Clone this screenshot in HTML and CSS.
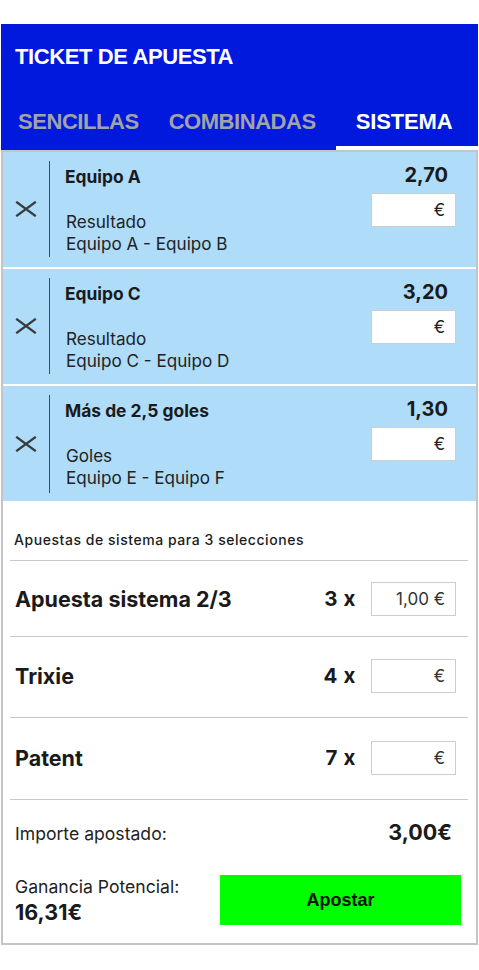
FILE: index.html
```html
<!DOCTYPE html>
<html lang="es">
<head>
<meta charset="utf-8">
<title>Ticket de apuesta</title>
<link rel="stylesheet" href="styles.css">
</head>
<body>
<div class="ticket">
  <header class="ticket-head">
    <h1 class="ticket-title">TICKET DE APUESTA</h1>
    <nav class="tabs">
      <span class="tab tab-first">SENCILLAS</span>
      <span class="tab">COMBINADAS</span>
      <span class="tab tab-active">SISTEMA</span>
    </nav>
  </header>

  <section class="panel">
    <div class="selections">
      <div class="sel">
        <div class="sel-remove">
          <svg class="x-icon" viewBox="0 0 22 16" width="22" height="16"><path d="M1.2 0.8 L20.8 15.2 M20.8 0.8 L1.2 15.2"/></svg>
        </div>
        <div class="sel-body">
          <div class="sel-name">Equipo A</div>
          <div class="sel-market">Resultado</div>
          <div class="sel-event">Equipo A - Equipo B</div>
        </div>
        <div class="sel-side">
          <div class="sel-odds">2,70</div>
          <div class="stake">€</div>
        </div>
      </div>
      <div class="sel">
        <div class="sel-remove">
          <svg class="x-icon" viewBox="0 0 22 16" width="22" height="16"><path d="M1.2 0.8 L20.8 15.2 M20.8 0.8 L1.2 15.2"/></svg>
        </div>
        <div class="sel-body">
          <div class="sel-name">Equipo C</div>
          <div class="sel-market">Resultado</div>
          <div class="sel-event">Equipo C - Equipo D</div>
        </div>
        <div class="sel-side">
          <div class="sel-odds">3,20</div>
          <div class="stake">€</div>
        </div>
      </div>
      <div class="sel">
        <div class="sel-remove">
          <svg class="x-icon" viewBox="0 0 22 16" width="22" height="16"><path d="M1.2 0.8 L20.8 15.2 M20.8 0.8 L1.2 15.2"/></svg>
        </div>
        <div class="sel-body">
          <div class="sel-name">Más de 2,5 goles</div>
          <div class="sel-market">Goles</div>
          <div class="sel-event">Equipo E - Equipo F</div>
        </div>
        <div class="sel-side">
          <div class="sel-odds">1,30</div>
          <div class="stake">€</div>
        </div>
      </div>
    </div>

    <div class="system">
      <div class="system-caption">Apuestas de sistema para 3 selecciones</div>
      <div class="sys-row">
        <span class="sys-name">Apuesta sistema 2/3</span>
        <span class="sys-count">3 x</span>
        <span class="stake stake-sys">1,00 €</span>
      </div>
      <div class="sys-row sys-row-tall">
        <span class="sys-name">Trixie</span>
        <span class="sys-count">4 x</span>
        <span class="stake stake-sys">€</span>
      </div>
      <div class="sys-row sys-row-last">
        <span class="sys-name">Patent</span>
        <span class="sys-count">7 x</span>
        <span class="stake stake-sys">€</span>
      </div>
    </div>

    <div class="summary">
      <div class="sum-row">
        <span class="sum-label">Importe apostado:</span>
        <span class="sum-total">3,00€</span>
      </div>
      <div class="sum-row sum-row-bet">
        <div class="gain">
          <div class="sum-label">Ganancia Potencial:</div>
          <div class="gain-value">16,31€</div>
        </div>
        <button class="bet-btn" type="button">Apostar</button>
      </div>
    </div>
  </section>
</div>
</body>
</html>
```

FILE: styles.css
```css
* { box-sizing: border-box; }

body {
  margin: 0;
  background: #ffffff;
  font-family: Inter, "Noto Sans", sans-serif;
  color: #1c1c1c;
}

.ticket {
  width: 477px;
  margin: 24px 1px 0;
}

/* Header */
.ticket-head {
  background: #0019dc;
  height: 126px;
  padding-top: 20px;
  font-family: "Liberation Sans", Arial, sans-serif;
}

.ticket-title {
  margin: 0;
  padding-left: 14px;
  font-size: 22px;
  line-height: 26px;
  font-weight: 700;
  letter-spacing: -0.4px;
  color: #ffffff;
}

.tabs {
  display: flex;
  margin-top: 39px;
}

.tab {
  padding: 0 15px 11px;
  font-size: 22px;
  line-height: 26px;
  font-weight: 700;
  letter-spacing: -0.45px;
  color: #a2a2aa;
  border-bottom: 4px solid transparent;
  white-space: nowrap;
}

.tab-first { padding-left: 17px; }

.tab-active {
  flex: 1;
  margin-left: 5px;
  padding-left: 20px;
  letter-spacing: -0.15px;
  color: #ffffff;
  border-bottom-color: #ffffff;
}

/* Panel */
.panel {
  border: 2px solid #c4c4c4;
  height: 795px;
  display: flex;
  flex-direction: column;
}

.sel {
  display: flex;
  height: 117px;
  padding: 9px 20px 10px 0;
  background: #aedcf9;
  border-bottom: 2px solid #ffffff;
}

.sel:last-child {
  height: 115px;
  padding-bottom: 8px;
  border-bottom: 0;
}

.sel-remove {
  width: 46px;
  display: flex;
  align-items: center;
  justify-content: center;
}

.x-icon path {
  stroke: #3c3c3c;
  stroke-width: 2.3;
  fill: none;
}

.sel-body {
  flex: 1;
  border-left: 1px solid #4a4a4a;
  padding-left: 15px;
}

.sel-name {
  margin-top: 5px;
  font-size: 17.4px;
  line-height: 22px;
  font-weight: 700;
  color: #1a1a1a;
}

.sel-market {
  margin-top: 23px;
  padding-left: 1px;
}

.sel-event { padding-left: 1px; }

.sel-market,
.sel-event {
  font-size: 17.1px;
  line-height: 22px;
  color: #222222;
}

.sel-side {
  width: 85px;
  padding-top: 2px;
}

.sel-odds {
  text-align: right;
  padding-right: 8px;
  font-size: 20px;
  line-height: 24px;
  font-weight: 700;
  color: #1a1a1a;
}

.stake {
  display: block;
  margin-top: 6px;
  height: 34px;
  background: #ffffff;
  border: 1px solid #cdcdcd;
  text-align: right;
  padding-right: 10px;
  font-size: 17px;
  line-height: 32px;
  color: #222222;
}

/* System bets */
.system {
  padding: 0 8px 0 7px;
}

.system-caption {
  padding: 30px 0 11px 4px;
  font-size: 14px;
  line-height: 18px;
  font-weight: 500;
  letter-spacing: 0.55px;
  color: #1c1c1c;
  border-bottom: 1px solid #c8c8c8;
}

.sys-row {
  display: flex;
  align-items: center;
  padding: 21px 12px 20px 5px;
  border-bottom: 1px solid #c8c8c8;
}

.sys-row-tall { padding-top: 22px; padding-bottom: 24px; }
.sys-row-last { padding-top: 23px; padding-bottom: 24px; }

.sys-name {
  flex: 1;
  font-size: 21.5px;
  line-height: 24px;
  font-weight: 700;
  color: #1a1a1a;
}

.sys-count {
  margin-right: 15px;
  font-size: 20.5px;
  line-height: 24px;
  font-weight: 700;
  letter-spacing: 0.6px;
  color: #1a1a1a;
}

.stake-sys {
  width: 85px;
  margin-top: 0;
  color: #333333;
}

/* Summary */
.summary {
  padding: 20px 15px 18px 12px;
}

.sum-row {
  display: flex;
  justify-content: space-between;
  align-items: baseline;
}

.sum-label {
  font-size: 17.6px;
  line-height: 22px;
  color: #222222;
}

.sum-total {
  margin-right: 9px;
  font-size: 21.5px;
  line-height: 24px;
  font-weight: 700;
  color: #1a1a1a;
}

.sum-row-bet {
  margin-top: 30px;
  align-items: flex-start;
}

.gain {
  padding-top: 1px;
}

.gain-value {
  margin-top: 2px;
  font-size: 21.5px;
  line-height: 24px;
  font-weight: 700;
  color: #1a1a1a;
}

.bet-btn {
  width: 241px;
  height: 50px;
  border: 0;
  background: #00ff00;
  font-family: "Liberation Sans", Arial, sans-serif;
  font-size: 18px;
  font-weight: 700;
  color: #111111;
  padding: 0;
  cursor: pointer;
}
```
